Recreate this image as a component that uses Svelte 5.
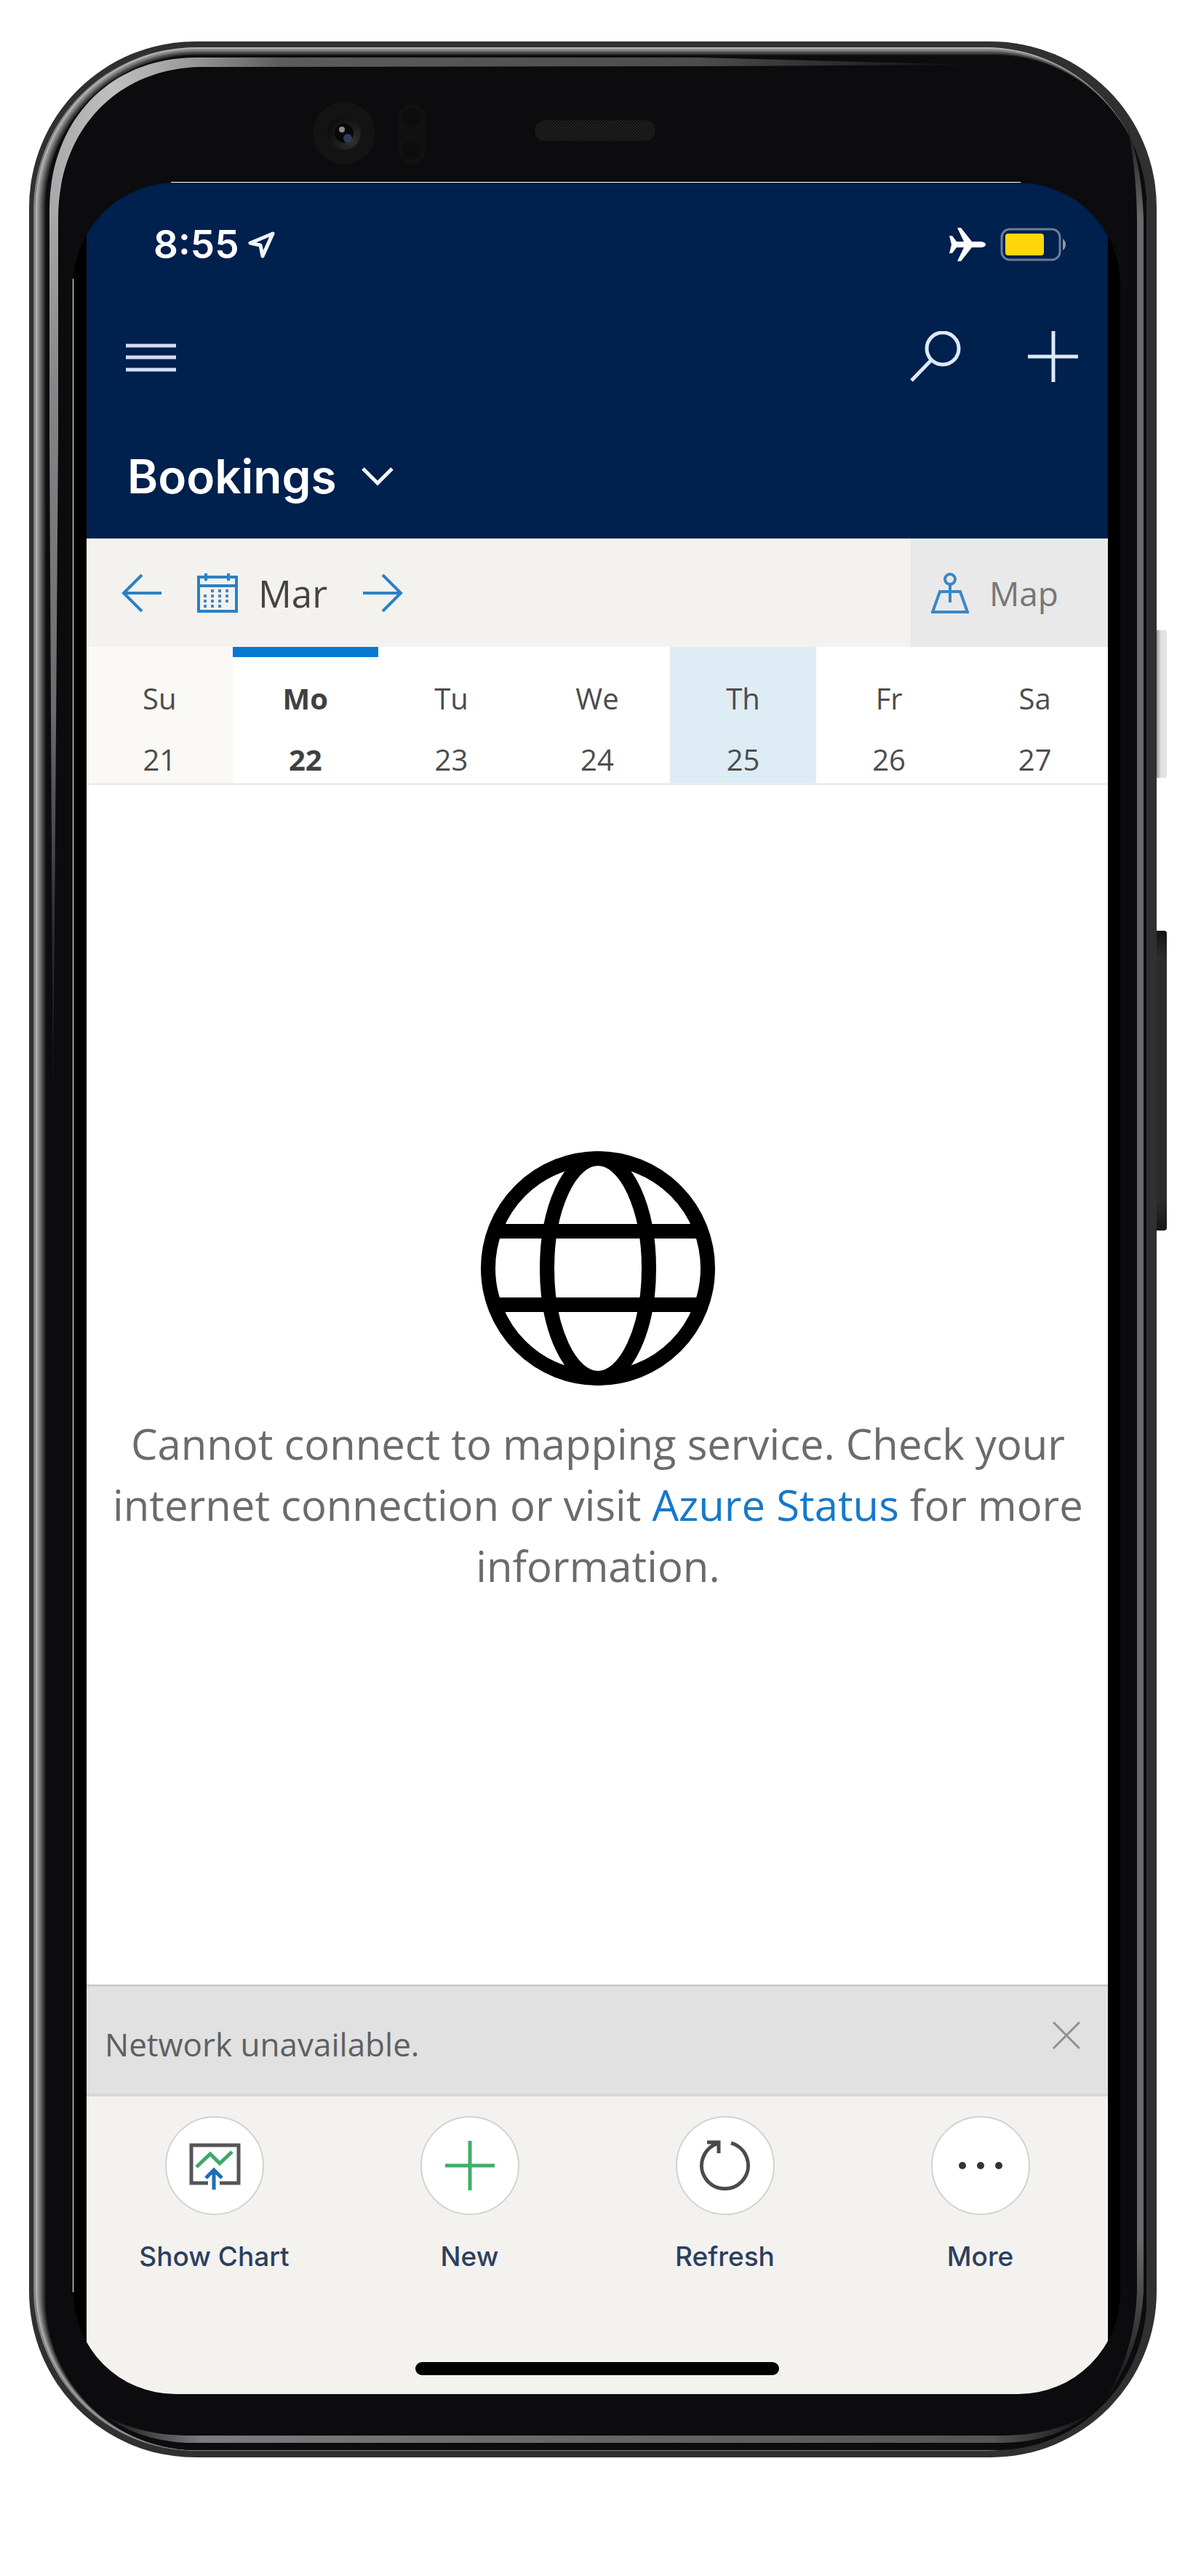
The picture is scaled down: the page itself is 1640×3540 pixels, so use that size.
<script>
  const days = [
    { name: 'Su', date: 21, past: true },
    { name: 'Mo', date: 22, today: true },
    { name: 'Tu', date: 23 },
    { name: 'We', date: 24 },
    { name: 'Th', date: 25 },
    { name: 'Fr', date: 26 },
    { name: 'Sa', date: 27 }
  ];
  let selected = $state(25);
  let offline = $state(true);

  const actions = [
    { id: 'chart', label: 'Show Chart' },
    { id: 'new', label: 'New' },
    { id: 'refresh', label: 'Refresh' },
    { id: 'more', label: 'More' }
  ];

  // Nested rounded rectangles that shade the polished metal rim.
  const rim = Array.from({ length: 15 }, (_, i) => {
    const level = Math.round(184 - (172 * i) / 14);
    const x = 49 + i;
    const y = 65 + Math.round(i * 0.8);
    return { x, y, w: 1576 - x, h: 3367 - y, r: 222 - i, fill: `rgb(${level},${level},${level})` };
  });
</script>

<div class="page">
  <div class="phone">
    <span class="key power"></span>
    <span class="key volume"></span>

    <svg class="frame" viewBox="40 57 1550 3320" preserveAspectRatio="none" aria-hidden="true">
      <defs>
        <linearGradient id="sheenTop" gradientUnits="userSpaceOnUse" x1="68" y1="0" x2="1343" y2="0">
          <stop offset="0" stop-color="#a8a8a8" />
          <stop offset="0.07" stop-color="#c0c0c0" />
          <stop offset="0.15" stop-color="#9a9a9a" />
          <stop offset="0.25" stop-color="#5c5c5c" />
          <stop offset="0.7" stop-color="#4c4c4c" />
          <stop offset="1" stop-color="#0d0d0e" />
        </linearGradient>
        <linearGradient id="sheenLeft" gradientUnits="userSpaceOnUse" x1="0" y1="290" x2="0" y2="1540">
          <stop offset="0" stop-color="#a8a8a8" />
          <stop offset="0.2" stop-color="#858585" />
          <stop offset="0.55" stop-color="#6c6c6c" />
          <stop offset="0.8" stop-color="#2c2c2e" />
          <stop offset="1" stop-color="#0d0d0e" />
        </linearGradient>
        <linearGradient id="sheenRight" x1="0" y1="0" x2="0" y2="1">
          <stop offset="0" stop-color="#1a1a1b" />
          <stop offset="0.04" stop-color="#6a6a6a" />
          <stop offset="0.93" stop-color="#6a6a6a" />
          <stop offset="1" stop-color="#121213" />
        </linearGradient>
        <linearGradient id="sheenBottom" x1="0" y1="0" x2="1" y2="0">
          <stop offset="0" stop-color="#121213" />
          <stop offset="0.1" stop-color="#7c7c7e" />
          <stop offset="0.5" stop-color="#666" />
          <stop offset="0.9" stop-color="#555" />
          <stop offset="1" stop-color="#121213" />
        </linearGradient>
        <radialGradient id="lens" cx="0.75" cy="0.75" r="0.8">
          <stop offset="0" stop-color="#303033" />
          <stop offset="1" stop-color="#0e0e0f" />
        </radialGradient>
        <pattern id="mesh" width="4" height="4" patternUnits="userSpaceOnUse">
          <rect width="4" height="4" fill="#0f0f10" />
          <rect width="2" height="2" fill="#232323" />
          <rect x="2" y="2" width="2" height="2" fill="#232323" />
        </pattern>
      </defs>
      <rect x="40" y="57" width="1550" height="3320" rx="228" fill="#303030" />
      <rect x="46" y="65" width="1530" height="3303" rx="223" fill="#848484" />
      {#each rim as ring}
        <rect x={ring.x} y={ring.y} width={ring.w} height={ring.h} rx={ring.r} fill={ring.fill} />
      {/each}
      <rect x="63" y="77" width="1513" height="3289" rx="206" fill="#0c0c0e" />
      <path d="M68 290C68 166 150 79 270 79H960L1343 89L960 91L280 92C160 92 80 180 80 300Z" fill="url(#sheenTop)" />
      <path d="M68 289V600L73 1540L80 600V299Z" fill="url(#sheenLeft)" />
      <path d="M1550 175Q1570 230 1572 300V3150Q1568 3230 1521 3295Q1560 3230 1563 3150V300Q1562 230 1550 175Z" fill="url(#sheenRight)" />
      <path d="M141 3318Q190 3346 256 3347H1380Q1450 3346 1500 3316Q1450 3356 1380 3357H256Q190 3354 141 3318Z" fill="url(#sheenBottom)" />
      <rect x="235" y="250" width="1168" height="1" fill="#fff" />
      <rect x="100" y="383" width="1" height="2767" fill="#fff" />
      <circle cx="473" cy="183" r="43" fill="#131313" />
      <circle cx="473" cy="183" r="23" fill="url(#lens)" />
      <circle cx="473" cy="183" r="13" fill="#08080a" />
      <circle cx="470" cy="178" r="4" fill="#8a8a8a" />
      <circle cx="478" cy="190" r="6" fill="#303a5a" />
      <rect x="548" y="143" width="37" height="82" rx="18" fill="#111" />
      <circle cx="566" cy="162" r="13" fill="#0d0d0d" />
      <circle cx="566" cy="206" r="13" fill="#0d0d0d" />
      <rect x="736" y="166" width="164" height="27" rx="12" fill="url(#mesh)" stroke="#1c1c1c" />
    </svg>

    <div class="screen">
      <header class="top">
        <div class="status">
          <span class="clock">8:55</span>
          <svg class="loc" viewBox="0 0 38 38" aria-hidden="true">
            <path d="M34 4L3 17L17 20L20 35Z" fill="none" stroke="#eef4ff" stroke-width="5" stroke-linejoin="round" />
          </svg>
          <svg class="plane" viewBox="0 0 50 46" aria-hidden="true">
            <path d="M0 11H4L10 19H20L11 0H16L31 19H44Q50 20 50 23Q50 26 44 27H31L16 46H11L20 27H10L4 35H0L3 23Z" fill="#fff" />
          </svg>
          <svg class="battery" viewBox="0 0 90 46" aria-hidden="true">
            <rect x="2" y="2" width="80" height="42" rx="11" fill="none" stroke="#6f7c96" stroke-width="3" />
            <rect x="7" y="8" width="53" height="30" rx="4" fill="#ffd60a" />
            <path d="M86 15Q90 18 90 23Q90 28 86 31Z" fill="#8d98ad" />
          </svg>
        </div>
        <nav class="nav">
          <button aria-label="Menu">
            <svg width="70" height="70" viewBox="0 0 70 70"><path d="M0 20H69M0 36H69M0 53H69" stroke="#d3def5" stroke-width="5" /></svg>
          </button>
          <button class="search" aria-label="Search">
            <svg width="70" height="70" viewBox="0 0 70 70" fill="none" stroke="#dde8fb" stroke-width="5">
              <circle cx="45" cy="24" r="22" /><path d="M29 40L2 68" />
            </svg>
          </button>
          <button aria-label="Add">
            <svg width="70" height="70" viewBox="0 0 70 70"><path d="M0 35H69M35 0V70" stroke="#dde8fb" stroke-width="5" /></svg>
          </button>
        </nav>
        <button class="view">
          <span>Bookings</span>
          <svg width="44" height="26" viewBox="0 0 44 26" aria-hidden="true"><path d="M2 2L22 22L42 2" fill="none" stroke="#f2f7ff" stroke-width="5" /></svg>
        </button>
      </header>

      <div class="toolbar">
        <button aria-label="Previous week">
          <svg width="56" height="52" viewBox="0 0 56 52"><path d="M28 1L3 26L28 51M3 26H55" fill="none" stroke="#2a80c4" stroke-width="4" /></svg>
        </button>
        <button class="month">
          <svg width="56" height="54" viewBox="0 0 56 54" aria-hidden="true">
            <path d="M2 5H54V52H2ZM2 17H54M12 0V10M43 0V10" fill="none" stroke="#2a80c4" stroke-width="4" />
            <path d="M19 24H47M9 31H47M9 38H47M9 45H38" stroke="#4a86ba" stroke-width="4" stroke-dasharray="4 6" />
          </svg>
          <span>Mar</span>
        </button>
        <button aria-label="Next week">
          <svg width="56" height="52" viewBox="0 0 56 52"><path d="M28 1L53 26L28 51M1 26H53" fill="none" stroke="#2a80c4" stroke-width="4" /></svg>
        </button>
        <button class="map">
          <svg width="52" height="56" viewBox="0 0 52 56" aria-hidden="true">
            <path d="M20 26H12L2 54H50L40 26H32M26 16V41" fill="none" stroke="#3a87c6" stroke-width="4" />
            <path d="M12 26H40" stroke="#3a87c6" stroke-width="4" />
            <circle cx="26" cy="9" r="7" fill="none" stroke="#3a87c6" stroke-width="4" />
          </svg>
          <span>Map</span>
        </button>
      </div>

      <div class="week">
        {#each days as day}
          <button
            class="day"
            class:past={day.past}
            class:today={day.today}
            class:selected={selected === day.date}
            onclick={() => (selected = day.date)}
          >
            <span>{day.name}</span>
            <span>{day.date}</span>
          </button>
        {/each}
      </div>

      <main class="empty">
        <svg width="322" height="322" viewBox="0 0 322 322" fill="none" stroke="#000" stroke-width="20" aria-hidden="true">
          <circle cx="161" cy="161" r="151" />
          <ellipse cx="161" cy="161" rx="70" ry="151" />
          <path d="M22 110H300M22 211H300" />
        </svg>
        <p>
          Cannot connect to mapping service. Check your internet connection or visit
          <a href="#azure-status">Azure Status</a> for more information.
        </p>
      </main>

      {#if offline}
        <div class="notice" role="status">
          <span>Network unavailable.</span>
          <button aria-label="Dismiss" onclick={() => (offline = false)}>
            <svg width="38" height="38" viewBox="0 0 38 38"><path d="M1 1L37 37M37 1L1 37" stroke="#919191" stroke-width="3" /></svg>
          </button>
        </div>
      {/if}

      <footer class="commands">
        <div class="actions">
          {#each actions as action}
            <button class="action">
              <span class="disc">
                <svg width="72" height="72" viewBox="0 0 72 72" fill="none" aria-hidden="true">
                  {#if action.id === 'chart'}
                    <path d="M27 60H4V8H69V60H43" stroke="#555" stroke-width="5" />
                    <path d="M11 38L30 20L43 33L60 17" stroke="#3fa866" stroke-width="5" />
                    <path d="M35 69V44M24 53L35 42L46 53" stroke="#1f6db5" stroke-width="5" />
                  {:else if action.id === 'new'}
                    <path d="M2 36H70M36 2V70" stroke="#41ad6a" stroke-width="5" />
                  {:else if action.id === 'refresh'}
                    <path d="M44 5A32 32 0 1 1 27 5" stroke="#4a4a4a" stroke-width="5" />
                    <path d="M11 4H27V19" stroke="#4a4a4a" stroke-width="5" />
                  {:else}
                    <g fill="#333"><circle cx="11" cy="36" r="5" /><circle cx="36" cy="36" r="5" /><circle cx="61" cy="36" r="5" /></g>
                  {/if}
                </svg>
              </span>
              <span>{action.label}</span>
            </button>
          {/each}
        </div>
        <div class="home"></div>
      </footer>
    </div>
  </div>
</div>

<style>
  :global(body) {
    margin: 0;
    background: #fff;
  }
  button {
    margin: 0;
    padding: 0;
    border: 0;
    background: none;
    color: inherit;
    font: inherit;
    cursor: pointer;
  }
  svg {
    display: block;
    flex: none;
  }
  .page {
    box-sizing: border-box;
    display: flex;
    min-height: 100vh;
    padding: 57px 50px 163px 40px;
  }
  .phone {
    position: relative;
    display: flex;
    flex: 1;
    min-width: 0;
    padding: 194px 50px 87px 61px;
  }
  .frame {
    position: absolute;
    inset: 0;
    width: 100%;
    height: 100%;
  }
  .key {
    position: absolute;
    right: -14px;
    width: 18px;
    border-radius: 0 4px 4px 0;
  }
  .power {
    top: 809px;
    height: 203px;
    background: linear-gradient(90deg, #999 4px, #c8c8c8 8px, #e3e3e3 10px);
  }
  .volume {
    top: 1222px;
    height: 412px;
    background: linear-gradient(#141414, #2b2b2b 36px, #2b2b2b 370px, #161616);
  }
  .screen {
    position: relative;
    box-sizing: border-box;
    display: flex;
    flex: 1;
    flex-direction: column;
    min-width: 0;
    padding: 0 17px 0 18px;
    overflow: hidden;
    border-radius: 140px;
    background: #000;
    font-family: 'Open Sans', 'Noto Sans', sans-serif;
  }
  .top {
    padding: 58px 40px 45px 54px;
    background: #00204d;
    color: #fff;
    font-family: Inter, 'Liberation Sans', sans-serif;
  }
  .status {
    display: flex;
    align-items: center;
    padding: 0 18px 0 38px;
    line-height: 54px;
  }
  .clock {
    font-size: 53px;
    font-weight: 600;
  }
  .loc {
    width: 38px;
    height: 38px;
    margin-left: 12px;
  }
  .plane {
    width: 50px;
    height: 46px;
    margin-left: auto;
  }
  .battery {
    width: 90px;
    height: 46px;
    margin-left: 20px;
  }
  .nav {
    display: flex;
    gap: 92px;
    margin: 92px 0 90px;
  }
  .search {
    margin-left: auto;
  }
  .view {
    display: flex;
    align-items: center;
    gap: 34px;
    padding-left: 2px;
    font-size: 64px;
    font-weight: 600;
    line-height: 80px;
  }
  .toolbar {
    display: flex;
    align-items: center;
    gap: 48px;
    height: 149px;
    padding-left: 48px;
    background: #f3f2ef;
    color: #444;
  }
  .month {
    display: flex;
    align-items: center;
    gap: 28px;
    font-size: 51px;
    line-height: 72px;
  }
  .map {
    display: flex;
    align-items: center;
    align-self: stretch;
    gap: 28px;
    margin-left: auto;
    padding: 0 68px 0 28px;
    background: #e9e9e9;
    color: #777;
    font-size: 46px;
    line-height: 72px;
  }
  .week {
    display: grid;
    grid-template-columns: repeat(7, 1fr);
    border-bottom: 3px solid #ededed;
    background: #fff;
  }
  .day {
    display: grid;
    gap: 24px;
    padding: 41px 0 2px;
    color: #4c4c4c;
    font-size: 40px;
    line-height: 60px;
  }
  .past {
    background: #faf9f6;
  }
  .today {
    box-shadow: inset 0 14px #0878d0;
    color: #404040;
    font-weight: 700;
  }
  .selected {
    background: #deecf5;
  }
  .empty {
    display: flex;
    flex: 1;
    flex-direction: column;
    align-items: center;
    justify-content: center;
    gap: 38px;
    padding: 0 24px 30px 26px;
    background: #fff;
    color: #6b6b6b;
    font-size: 58px;
    line-height: 84px;
    text-align: center;
  }
  .empty p {
    margin: 0;
  }
  .empty a {
    color: #1679ca;
    text-decoration: none;
  }
  .notice {
    display: flex;
    align-items: flex-start;
    justify-content: space-between;
    padding: 48px 38px 37px 25px;
    border-top: 3px solid #cdcdcd;
    border-bottom: 4px solid #d8d7d3;
    background: #e1e1e1;
    color: #5f5f5f;
    font-size: 44px;
    line-height: 62px;
  }
  .commands {
    padding-bottom: 26px;
    background: #f3f2ef;
    font-family: Inter, 'Liberation Sans', sans-serif;
  }
  .actions {
    display: grid;
    grid-template-columns: repeat(4, 1fr);
    padding: 27px 0 120px;
  }
  .action {
    display: flex;
    flex-direction: column;
    align-items: center;
    gap: 32px;
    color: #2c3f5e;
    font-size: 37px;
    font-weight: 500;
    line-height: 50px;
  }
  .disc {
    display: grid;
    place-items: center;
    box-sizing: border-box;
    width: 136px;
    height: 136px;
    border: 2px solid #d2d2d4;
    border-radius: 50%;
    background: #fff;
  }
  .home {
    width: 500px;
    max-width: 60%;
    height: 18px;
    margin: 0 auto;
    border-radius: 9px;
    background: #000;
  }
</style>
